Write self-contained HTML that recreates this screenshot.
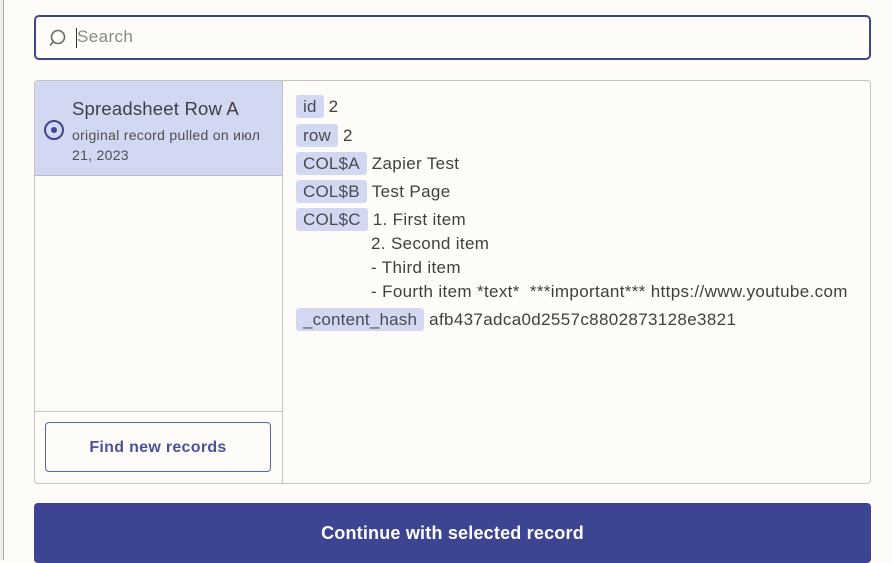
<!DOCTYPE html>
<html><head><meta charset="utf-8"><style>
*{box-sizing:border-box;margin:0;padding:0}
body{width:892px;height:560px;overflow:hidden;background:#fdfcf9;font-family:"Liberation Sans",sans-serif;color:#403f3e;position:relative}
.lb{position:absolute;left:0;top:0;width:4px;height:560px;border-right:1px solid #a8a6a2;background:#f1f0ec}
.search{position:absolute;left:34px;top:15px;width:837px;height:45px;border:2px solid #3d4592;border-radius:5px;background:#fdfcf9}
.search .ph{position:absolute;left:41px;top:10px;font-size:17px;letter-spacing:0.4px;color:#8a8984}
.search .cur{position:absolute;left:40px;top:11px;width:1px;height:20px;background:#333}
.panel{position:absolute;left:34px;top:80px;width:837px;height:404px;border:1px solid #c5c3be;border-radius:4px;overflow:hidden}
.left{position:absolute;left:0;top:0;width:248px;height:402px;border-right:1px solid #c5c3be}
.sel{position:absolute;left:0;top:0;width:247px;height:95px;background:#d3d8f2;border-bottom:1px solid #b7b9c9}
.sel .t{position:absolute;left:37px;top:17px;font-size:18.5px;letter-spacing:0.2px;color:#3f3e44}
.sel .s{position:absolute;left:37px;top:44px;font-size:14px;letter-spacing:0.3px;line-height:20px;color:#4f4e52;width:200px}
.radio{position:absolute;left:9px;top:39px;width:20px;height:20px;border:2px solid #3d4592;border-radius:50%}
.radio:after{content:"";position:absolute;left:5px;top:5px;width:6px;height:6px;border-radius:50%;background:#3d4592}
.div{position:absolute;left:0;top:330px;width:247px;height:1px;background:#c5c3be}
.btn{position:absolute;left:10px;top:341px;width:226px;height:50px;border:1.5px solid #5d63b4;border-radius:4px;font-weight:bold;font-size:16px;letter-spacing:0.3px;color:#4b519e;text-align:center;line-height:49px}
.r{position:absolute;left:296px;font-size:17px;letter-spacing:0.35px;white-space:nowrap;color:#403f3e}
.tag{display:inline-block;background:#d3d8f2;border-radius:3px;padding:0 7px;height:23px;line-height:23px;margin-right:5px;color:#4a4a50;letter-spacing:0.2px}
.cont{position:absolute;left:34px;top:503px;width:837px;height:60px;background:#3d4592;border-radius:4px;color:#fff;font-weight:bold;font-size:18px;letter-spacing:0.2px;text-align:center;line-height:60px}
</style></head><body>
<div class="lb"></div>
<div class="search">
<svg style="position:absolute;left:9px;top:10px" width="22" height="22" viewBox="0 0 22 22"><circle cx="13" cy="10" r="6.5" fill="none" stroke="#6b6a66" stroke-width="1.6"/><path d="M8.3 14.7 L5 18.5" stroke="#6b6a66" stroke-width="1.6"/></svg>
<div class="cur"></div><div class="ph">Search</div></div>
<div class="panel">
<div class="left">
<div class="sel"><div class="radio"></div><div class="t">Spreadsheet Row A</div><div class="s">original record pulled on июл 21, 2023</div></div>
<div class="div"></div>
<div class="btn">Find new records</div>
</div>
</div>
<div class="r" style="top:95px"><span class="tag">id</span>2</div>
<div class="r" style="top:124px"><span class="tag">row</span>2</div>
<div class="r" style="top:152px"><span class="tag">COL$A</span>Zapier Test</div>
<div class="r" style="top:180px"><span class="tag">COL$B</span>Test Page</div>
<div class="r" style="top:208px"><span class="tag">COL$C</span>1. First item</div>
<div class="r" style="left:371px;top:232px;line-height:24px">2. Second item<br>- Third item<br>- Fourth item *text*&nbsp; ***important*** https://www.youtube.com</div>
<div class="r" style="top:308px"><span class="tag">_content_hash</span>afb437adca0d2557c8802873128e3821</div>
<div class="cont">Continue with selected record</div>
</body></html>
